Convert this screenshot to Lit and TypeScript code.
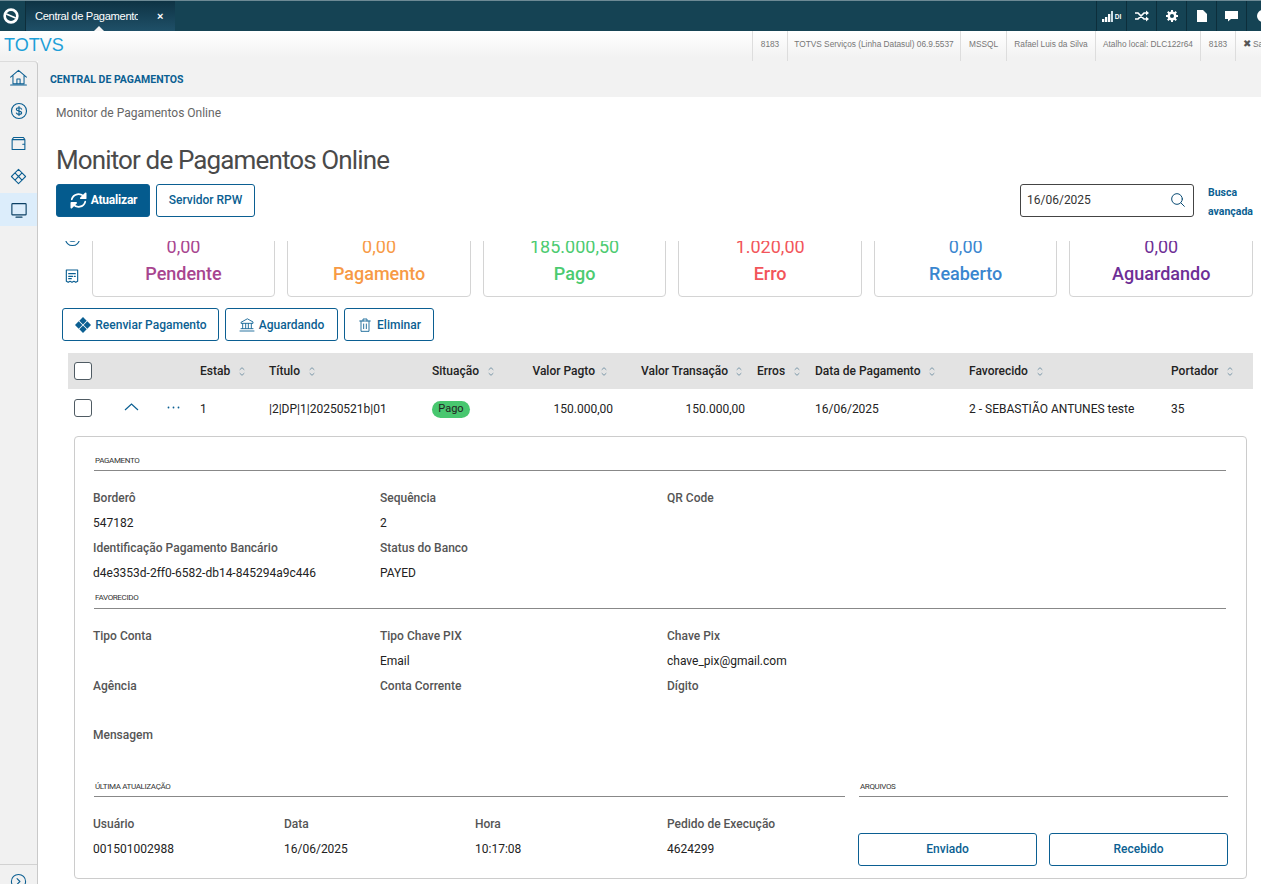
import { LitElement, html, css, svg } from "lit";
import { customElement } from "lit/decorators.js";

const ic = (size: number, body: unknown, sw = 1.5) => html`<svg width=${size} height=${size} viewBox="0 0 24 24" fill="none" stroke="currentColor" stroke-width=${sw} stroke-linecap="round" stroke-linejoin="round">${body}</svg>`;

const home = svg`<path d="M2 11.500 12 3l10 8.500M5 9.500V20h14V9.500M2 21.500h20M10 20v-6h4v6"/>`;
const dollar = svg`<circle cx="12" cy="12" r="10"/><path d="M15.500 9.500c-.5-1.200-1.800-1.800-3.500-1.800-2 0-3.500.8-3.500 2.200 0 3 7 1.400 7 4.400 0 1.400-1.500 2.200-3.500 2.200-1.700 0-3-.6-3.500-1.800M12 6v12"/>`;
const wallet = svg`<path d="M3 6.500h18v14H3zM3 6.500 5 3.500h14l2 3M21 13h-3"/>`;
const diamonds = svg`<path d="M12 2l5 5-5 5-5-5zM7 7l5 5-5 5-5-5zM17 7l5 5-5 5-5-5zM12 12l5 5-5 5-5-5z"/>`;
const monitor = svg`<rect x="2.500" y="3.500" width="19" height="15" rx="1"/><path d="M8 21.500h8"/>`;
const eye = svg`<circle cx="12" cy="12" r="10"/><path d="M5 12c2-3 4.500-4 7-4s5 1 7 4c-2 3-4.500 4-7 4s-5-1-7-4z"/><circle cx="12" cy="12" r="1.500"/>`;
const receipt = svg`<path d="M3.500 3h17v17l-2.800 1.500-2.800-1.500-2.900 1.500-2.900-1.500-2.800 1.500-2.800-1.500zM7 8.500h10M7 12.500h6M15.500 12.500h1.500M7 16h4"/>`;
const bank = svg`<path d="M12 3 3 8v1.500h18V8zM5.500 10v7M10 10v7M14 10v7M18.500 10v7M3 17.500h18M1.500 21h21"/>`;
const trash = svg`<path d="M4 6h16M9 6V3h6v3M6 6v15.500h12V6M10 10.500v7M14 10.500v7"/>`;
const search = svg`<circle cx="10.500" cy="10.500" r="8"/><path d="m16.500 16.500 5 5"/>`;
const refresh = svg`<path d="M3.500 10.500A8.800 8.800 0 0 1 19 7.500M20.500 13.500A8.800 8.800 0 0 1 5 16.500"/><path d="M21 3v6h-6zM3 21v-6h6z" fill="currentColor"/>`;

const sort = html`<svg class="sort" width="6" height="9" viewBox="0 0 6 9" fill="none" stroke="currentColor" stroke-width=".9"><path d="M.7 2.800 3 .7l2.300 2.100M.7 6.200 3 8.300l2.300-2.100"/></svg>`;

const cards = [
  ["0,00", "Pendente", "#a8458f"],
  ["0,00", "Pagamento", "#f79a45"],
  ["185.000,50", "Pago", "#4ccb70"],
  ["1.020,00", "Erro", "#f2555a"],
  ["0,00", "Reaberto", "#3a86cf"],
  ["0,00", "Aguardando", "#6e2f96"],
];

const headers: [string, string][] = [
  ["", ""],
  ["Estab", ""],
  ["Título", ""],
  ["Situação", ""],
  ["Valor Pagto", "end v1"],
  ["Valor Transação", "end v2"],
  ["Erros", "err"],
  ["Data de Pagamento", ""],
  ["Favorecido", ""],
  ["Portador", ""],
];

const status = [
  ["8183", 35],
  ["TOTVS Serviços (Linha Datasul) 06.9.5537", 173],
  ["MSSQL", 46],
  ["Rafael Luis da Silva", 89],
  ["Atalho local: DLC122r64", 105],
  ["8183", 35],
] as [string, number][];

const field = (label: string, value = "") => html`<div class="field"><div class="lbl">${label}</div><div class="val">${value}</div></div>`;

@customElement("app-root")
export class AppRoot extends LitElement {
  static styles = css`
    :host { display: flex; flex-direction: column; width: 1261px; height: 884px; overflow: hidden; background: #fff; font-family: Roboto, sans-serif; color: #222; }
    .top { height: 31px; flex: none; display: flex; background: #154354; border-top: 1px solid #6d8a95; box-sizing: border-box; color: #fff; }
    .logo { width: 26px; display: flex; align-items: center; justify-content: center; border-right: 1px solid #0d2e3b; box-sizing: border-box; padding-right: 4px; }
    .tab { position: relative; width: 149px; box-sizing: border-box; background: linear-gradient(#0e3344, #1f5068); display: flex; align-items: center; padding: 0 0 1px 9px; font: 11.200px "Liberation Sans", sans-serif; letter-spacing: -.35px; }
    .tab .t { width: 103px; overflow: hidden; white-space: nowrap; flex: none; }
    .tab .x { margin-left: 19px; font-size: 11px; font-weight: bold; }
    .tab::after { content: ""; position: absolute; left: 68px; bottom: 0; border: 5px solid transparent; border-top: 0; border-bottom-color: #f4f4f4; }
    .tools { margin-left: auto; display: flex; width: 165px; overflow: hidden; flex: none; }
    .tool { width: 30px; display: flex; align-items: center; justify-content: center; border-left: 1px solid #0d2e3b; box-sizing: border-box; gap: 2px; flex: none; font: bold 6.500px "Liberation Sans", sans-serif; }
    .tool .ring { margin-left: 2px; flex: none; }
    .status { height: 30px; flex: none; display: flex; align-items: stretch; background: linear-gradient(#fff, #f2f2f2 90%); }
    .brand { width: 752px; box-sizing: border-box; padding: 0 0 1px 4px; font: 18px "Liberation Sans", sans-serif; color: #1d9fd8; display: flex; align-items: center; flex: none; }
    .cell { display: flex; align-items: center; justify-content: center; flex: none; box-sizing: border-box; border-left: 1px solid #ddd; font: 8.300px "Liberation Sans", sans-serif; color: #777; white-space: nowrap; padding-bottom: 5px; }
    .cell.sair { justify-content: flex-start; padding-left: 7px; flex: 1; overflow: hidden; gap: 2px; }
    .cell.sair b { font-size: 10px; font-weight: 400; color: #555; }
    .body { flex: 1; display: flex; min-height: 0; }
    aside { width: 38px; flex: none; box-sizing: border-box; background: #f1f1f1; border-right: 1px solid #c9c9c9; border-top-right-radius: 4px; display: flex; flex-direction: column; color: #0b5f92; box-shadow: inset 0 1px 0 #dcdcdc; }
    .nav { height: 33px; display: flex; align-items: center; justify-content: center; flex: none; }
    .nav.on { background: #dcedfb; color: #0b3f63; }
    .foot { margin-top: auto; height: 20px; border-top: 1px solid #d2d2d2; display: flex; justify-content: center; padding-top: 8px; box-sizing: border-box; overflow: hidden; }
    main { flex: 1; min-width: 0; display: flex; flex-direction: column; }
    .strip { height: 36px; flex: none; background: #f2f2f2; display: flex; align-items: center; padding-left: 12px; font-size: 10.500px; font-weight: 700; color: #0b5f92; }
    .crumb { font-size: 12px; color: #666; padding: 9px 0 0 18px; height: 25px; flex: none; }
    h1 { margin: 0; padding: 13px 0 0 18px; font-size: 26px; font-weight: 400; color: #4a4a4a; line-height: 32px; flex: none; letter-spacing: -.87px; }
    .actions { display: flex; height: 41px; box-sizing: border-box; padding: 8px 7px 0 18px; align-items: flex-start; gap: 6px; flex: none; }
    .btn { height: 33px; box-sizing: border-box; border: 1px solid #0b5f92; border-radius: 3px; background: #fff; color: #0b5f92; display: inline-flex; align-items: center; justify-content: center; font: 500 12px Roboto, sans-serif; gap: 4px; padding: 0 0 1px; }
    .btn.primary { background: #045b8e; color: #fff; width: 94px; font-weight: 700; letter-spacing: -.2px; gap: 3px; }
    .rpw { width: 99px; }
    .date { margin-left: auto; width: 174px; height: 33px; box-sizing: border-box; border: 1px solid #444; border-radius: 3px; display: flex; align-items: center; justify-content: space-between; padding: 0 7px 1px 6px; font-size: 12px; color: #333; }
    .date svg { color: #0a4c75; }
    .adv { width: 46px; margin-left: 8px; font-size: 10.500px; font-weight: 700; color: #0b5f92; line-height: 19px; margin-top: -1px; }
    .scroll { margin-top: 24px; flex: 1; min-height: 0; overflow: hidden; }
    .inner { margin-top: -43px; }
    .cards { display: flex; padding: 0 8px 0 24px; }
    .side { width: 29.750px; flex: none; display: flex; flex-direction: column; align-items: center; color: #0b5f92; gap: 21px; padding: 32px 9px 0 0; box-sizing: border-box; }
    .grid { flex: 1; display: grid; grid-template-columns: repeat(6, 1fr); gap: 12px; }
    .card { height: 99px; box-sizing: border-box; border: 1px solid #d4d4d4; border-radius: 4px; padding-top: 38px; text-align: center; }
    .card .v { font-size: 18px; line-height: 20px; }
    .card .n { font-size: 18px; font-weight: 500; line-height: 34px; }
    .bulk { display: flex; gap: 6px; padding: 11px 0 0 24px; }
    .bulk .btn { padding-bottom: 0; }
    .bulk .a { width: 157px; padding-left: 1px; } .bulk .b { width: 113px; } .bulk .c { width: 90px; }
    .tbl { margin: 12px 8px 0 30px; }
    .row { display: grid; grid-template-columns: 132px 69px 163px 82px 99px 132px 70px 154px 202px 82px; align-items: center; font-size: 12px; }
    .head { height: 36px; background: #e3e3e3; font-weight: 500; color: #222; }
    .line { height: 37px; color: #222; }
    .line > div:not(.lead) { padding-top: 2px; }
    .hcell { display: flex; align-items: center; gap: 9px; }
    .hcell.end { justify-content: flex-end; }
    .hcell.v1 { padding-right: 6px; gap: 6px; }
    .hcell.v2 { padding-right: 3px; gap: 8px; }
    .hcell.err { padding-left: 12px; }
    .sort { color: #6f8fa3; flex: none; }
    .lead { display: flex; align-items: center; padding-left: 6px; color: #0b5f92; }
    .cb { width: 16px; height: 16px; border: 1px solid #4f5b63; border-radius: 3px; background: #fff; flex: none; }
    .chev { margin-left: 32px; margin-top: -1px; }
    .dots { margin-left: 28px; flex: none; }
    .num { text-align: right; }
    .pill { width: 38px; height: 17px; margin-top: 1px; border-radius: 9px; background: #48c76f; font-size: 11px; text-align: center; line-height: 15px; }
    .detail { margin: 10px 6px 0 6px; height: 443px; box-sizing: border-box; border: 1px solid #ccc; border-radius: 4px; padding: 0 18px; }
    .sec { font-size: 8px; color: #333; border-bottom: 1px solid #888; height: 14px; box-sizing: content-box; line-height: 9px; text-transform: uppercase; letter-spacing: -.35px; padding-left: 1px; margin-left: 1px; }
    .sec.a { margin-top: 19px; margin-right: 2px; }
    .sec.b { margin-top: 10px; margin-right: 2px; height: 15px; }
    .f3 { display: grid; grid-template-columns: 287px 287px 1fr; margin-top: 13px; }
    .f4 { display: grid; grid-template-columns: 191px 191px 192px 1fr; margin-top: 13px; }
    .field { height: 49.500px; }
    .lbl { font-size: 12px; font-weight: 500; color: #555; line-height: 14px; padding-top: 7px; height: 25px; box-sizing: border-box; }
    .val { font-size: 12px; color: #222; line-height: 14px; padding-top: 7px; }
    .two { display: flex; gap: 13px; align-items: flex-start; padding-top: 11px; }
    .two .left { width: 752px; flex: none; }
    .two .right { flex: 1; }
    .files { display: flex; gap: 12px; padding-top: 36px; }
    .files .btn { flex: 1; }
  `;

  render() {
    return html`
      <div class="top">
        <div class="logo"><svg width="16" height="16" viewBox="0 0 24 24" fill="none" stroke="#fff"><circle cx="12" cy="12" r="9.500" stroke-width="4"/><path d="M5 9 19 15" stroke-width="2.800"/></svg></div>
        <div class="tab"><span class="t">Central de Pagamento</span><span class="x">×</span></div>
        <div class="tools">
          <div class="tool"><svg width="11" height="11" viewBox="0 0 11 11" fill="#fff"><rect x="0" y="8" width="2.300" height="3"/><rect x="3" y="6" width="2.300" height="5"/><rect x="6" y="3" width="2.300" height="8"/><rect x="9" y="0" width="2" height="11" fill="#cfe0e8"/></svg><span>DI</span></div>
          <div class="tool"><svg width="14" height="12" viewBox="0 0 14 12" fill="none" stroke="#fff" stroke-width="1.700"><path d="M0 3h3l6 6h3M0 9h3l6-6h3"/><path d="M11 .5 14 3l-3 2.500zM11 6.500 14 9l-3 2.500z" fill="#fff" stroke="none"/></svg></div>
          <div class="tool"><svg width="12" height="12" viewBox="0 0 24 24" fill="none" stroke="#fff"><circle cx="12" cy="12" r="6.500" stroke-width="5"/><path d="M12 0v5M12 19v5M0 12h5M19 12h5M3.500 3.500 7 7M17 17l3.500 3.500M20.500 3.500 17 7M7 17l-3.500 3.500" stroke-width="4"/></svg></div>
          <div class="tool"><svg width="10" height="12" viewBox="0 0 10 12" fill="#fff"><path d="M0 0h6l4 4v8H0z"/></svg></div>
          <div class="tool"><svg width="13" height="12" viewBox="0 0 13 12" fill="#fff"><path d="M0 1h13v8H6l-3 2.500V9H0z"/></svg></div>
          <div class="tool"><svg class="ring" width="12" height="12" viewBox="0 0 12 12"><circle cx="6" cy="6" r="6" fill="#fff"/></svg></div>
        </div>
      </div>
      <div class="status">
        <div class="brand">TOTVS</div>
        ${status.map(([t, w]) => html`<div class="cell" style="width:${w}px">${t}</div>`)}
        <div class="cell sair"><b>✖</b> Sair</div>
      </div>
      <div class="body">
        <aside>
          <div class="nav">${ic(19, home, 1.300)}</div>
          <div class="nav">${ic(18, dollar, 1.500)}</div>
          <div class="nav">${ic(17, wallet, 1.500)}</div>
          <div class="nav">${ic(17, diamonds, 1.500)}</div>
          <div class="nav on">${ic(18, monitor, 1.500)}</div>
          <div class="foot">${ic(17, svg`<circle cx="12" cy="12" r="10"/><path d="m10 8 4 4-4 4"/>`, 1.500)}</div>
        </aside>
        <main>
          <div class="strip">CENTRAL DE PAGAMENTOS</div>
          <div class="crumb">Monitor de Pagamentos Online</div>
          <h1>Monitor de Pagamentos Online</h1>
          <div class="actions">
            <button class="btn primary">${ic(19, refresh, 2.200)}Atualizar</button>
            <button class="btn rpw">Servidor RPW</button>
            <div class="date">16/06/2025 ${ic(16, search, 1.500)}</div>
            <div class="adv">Busca avançada</div>
          </div>
          <div class="scroll"><div class="inner">
            <div class="cards">
              <div class="side">${ic(17, eye, 1.500)}${ic(16, receipt, 1.700)}</div>
              <div class="grid">
                ${cards.map(([v, n, c]) => html`<div class="card" style="color:${c}"><div class="v">${v}</div><div class="n">${n}</div></div>`)}
              </div>
            </div>
            <div class="bulk">
              <button class="btn a"><svg width="16" height="16" viewBox="0 0 16 16" fill="currentColor"><path d="M8 0l3.700 3.700L8 7.400 4.300 3.700zM3.700 4.300 7.400 8l-3.700 3.700L0 8zM12.300 4.300 16 8l-3.700 3.700L8.600 8zM8 8.600l3.700 3.700L8 16l-3.700-3.700z"/></svg>Reenviar Pagamento</button>
              <button class="btn b">${ic(16, bank, 1.300)}Aguardando</button>
              <button class="btn c">${ic(16, trash, 1.300)}Eliminar</button>
            </div>
            <div class="tbl">
              <div class="row head">
                ${headers.map(([h, a], i) => i === 0
                  ? html`<div class="lead"><div class="cb"></div></div>`
                  : html`<div class="hcell ${a}"><span>${h}</span>${sort}</div>`)}
              </div>
              <div class="row line">
                <div class="lead"><div class="cb"></div>
                  <svg class="chev" width="15" height="8" viewBox="0 0 15 8" fill="none" stroke="currentColor" stroke-width="1.200"><path d="M1 7l6.500-6L14 7"/></svg>
                  <svg class="dots" width="13" height="3" viewBox="0 0 13 3" fill="currentColor"><circle cx="1.500" cy="1.500" r=".9"/><circle cx="6.500" cy="1.500" r=".9"/><circle cx="11.500" cy="1.500" r=".9"/></svg></div>
                <div>1</div><div>|2|DP|1|20250521b|01</div>
                <div><div class="pill">Pago</div></div>
                <div class="num">150.000,00</div>
                <div class="num">150.000,00</div>
                <div></div>
                <div>16/06/2025</div><div>2 - SEBASTIÃO ANTUNES teste</div><div>35</div>
              </div>
              <div class="detail">
                <div class="sec a">Pagamento</div>
                <div class="f3">
                  ${field("Borderô", "547182")}${field("Sequência", "2")}${field("QR Code")}
                  ${field("Identificação Pagamento Bancário", "d4e3353d-2ff0-6582-db14-845294a9c446")}${field("Status do Banco", "PAYED")}
                </div>
                <div class="sec b">Favorecido</div>
                <div class="f3">
                  ${field("Tipo Conta")}${field("Tipo Chave PIX", "Email")}${field("Chave Pix", "chave_pix@gmail.com")}
                  ${field("Agência")}${field("Conta Corrente")}${field("Dígito")}
                  ${field("Mensagem")}
                </div>
                <div class="two">
                  <div class="left">
                    <div class="sec">Última Atualização</div>
                    <div class="f4">
                      ${field("Usuário", "001501002988")}${field("Data", "16/06/2025")}${field("Hora", "10:17:08")}${field("Pedido de Execução", "4624299")}
                    </div>
                  </div>
                  <div class="right">
                    <div class="sec">Arquivos</div>
                    <div class="files"><button class="btn">Enviado</button><button class="btn">Recebido</button></div>
                  </div>
                </div>
              </div>
            </div>
          </div></div>
        </main>
      </div>
    `;
  }
}
